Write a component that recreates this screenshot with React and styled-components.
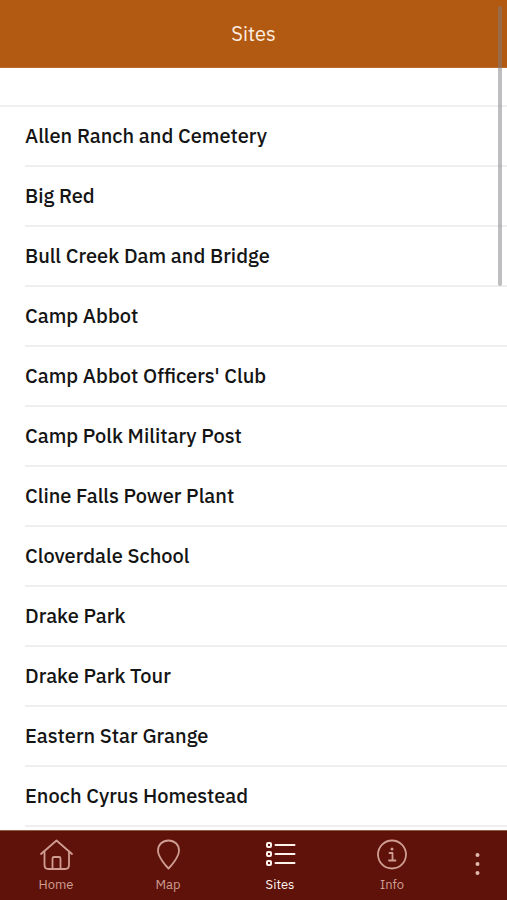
import React from 'react';
import styled, { createGlobalStyle } from 'styled-components';

const GlobalStyle = createGlobalStyle`
    * {
        box-sizing: border-box;
    }

    body {
        margin: 0;
        background: #fff;
        font-family: 'IBM Plex Sans', Roboto, sans-serif;
    }
`;

const Screen = styled.div`
    position: relative;
    display: flex;
    flex-direction: column;
    height: 100vh;
    overflow: hidden;
`;

const Header = styled.header`
    flex: none;
    padding: 20px 16px 19px;
    background: #b35a12;
    border-bottom: 1px solid #b9692c;
    text-align: center;
`;

const Title = styled.h1`
    margin: 0;
    color: #fdeee0;
    font-size: 20px;
    font-weight: 400;
    line-height: 28px;
`;

const ListArea = styled.main`
    flex: 1;
    min-height: 0;
    padding-top: 37px;
    overflow-y: auto;
    scrollbar-width: none;
`;

const SiteList = styled.ul`
    margin: 0;
    padding: 0 0 0 25px;
    border-top: 2px solid #f0f0f0;
    list-style: none;
`;

const SiteItem = styled.li`
    border-bottom: 2px solid #efefef;
`;

const SiteLink = styled.a`
    display: block;
    padding: 15px 16px 15px 0;
    color: #141414;
    font-size: 20px;
    font-weight: 500;
    line-height: 28px;
    text-decoration: none;
`;

const ScrollThumb = styled.div`
    position: absolute;
    top: 6px;
    right: 5px;
    width: 4px;
    height: 280px;
    border-radius: 2px;
    background: rgba(125, 125, 130, 0.5);
    pointer-events: none;
`;

const TabBar = styled.nav`
    flex: none;
    display: flex;
    height: 70px;
    background: #5e120a;
    border-top: 1px solid #8a5f44;
`;

const Tab = styled.a`
    flex: 1;
    display: flex;
    flex-direction: column;
    align-items: center;
    gap: 5px;
    padding-top: 8px;
    color: ${props => props.$active ? '#fff1ec' : '#cf9d92'};
    font-size: 13px;
    line-height: 18px;
    text-decoration: none;
`;

const MoreButton = styled.button`
    flex: none;
    display: flex;
    align-items: center;
    justify-content: center;
    width: 59px;
    padding: 0;
    border: 0;
    background: none;
    color: #dfb9ae;
`;

const Icon = styled.svg`
    display: block;
    width: 34px;
    height: 32px;
    fill: none;
    stroke: currentColor;
    stroke-width: 1.8;
    stroke-linecap: round;
    stroke-linejoin: round;
`;

const HomeIcon = () => (
    <Icon viewBox="0 0 34 32" aria-hidden="true">
        <path d="M2 15 17.500 1.500 33 15" />
        <path d="M5.500 12.500V26Q5.500 30 9.500 30H26Q30 30 30 26V12.500" />
        <path d="M13.500 30V19.500Q13.500 18 15 18H20Q21.500 18 21.500 19.500V30" />
    </Icon>
);

const MapIcon = () => (
    <Icon viewBox="0 0 34 32" aria-hidden="true">
        <path d="M17.500 29.500C15 27 7 18 7 11.500C7 5.500 11.500 1.500 17.500 1.500S28 5.500 28 11.500C28 18 20 27 17.500 29.500Z" />
    </Icon>
);

const SitesIcon = () => (
    <Icon viewBox="0 0 34 32" aria-hidden="true">
        {[6, 15, 24].map(y => (
            <g key={y} strokeWidth="2">
                <rect x="4" y={y - 2} width="4" height="4" rx="1" />
                <path d={`M12.500 ${y}H31.500`} />
            </g>
        ))}
    </Icon>
);

const InfoIcon = () => (
    <Icon viewBox="0 0 34 32" aria-hidden="true">
        <circle cx="17" cy="15.500" r="14" />
        <path d="M14.500 14H17.500V21.500M14 21.500H20.500" />
        <circle cx="17" cy="10" r="1.500" fill="currentColor" stroke="none" />
    </Icon>
);

const MoreIcon = () => (
    <Icon viewBox="0 0 34 32" aria-hidden="true">
        {[5, 14, 23].map(y => (
            <circle key={y} cx="16.500" cy={y} r="2" fill="currentColor" stroke="none" />
        ))}
    </Icon>
);

const sites = [
    'Allen Ranch and Cemetery',
    'Big Red',
    'Bull Creek Dam and Bridge',
    'Camp Abbot',
    "Camp Abbot Officers' Club",
    'Camp Polk Military Post',
    'Cline Falls Power Plant',
    'Cloverdale School',
    'Drake Park',
    'Drake Park Tour',
    'Eastern Star Grange',
    'Enoch Cyrus Homestead'
];

const tabs = [
    { name: 'Home', icon: HomeIcon },
    { name: 'Map', icon: MapIcon },
    { name: 'Sites', icon: SitesIcon },
    { name: 'Info', icon: InfoIcon }
];

class App extends React.Component {
    state = {
        active: 'Sites'
    }

    selectTab = (e, name) => {
        e.preventDefault();
        this.setState({ active: name });
    }

    render(){
        const { active } = this.state;
        return (
            <Screen>
                <GlobalStyle />
                <Header>
                    <Title>Sites</Title>
                </Header>
                <ListArea>
                    <SiteList>
                        {sites.map(site => (
                            <SiteItem key={site}>
                                <SiteLink href="#site">{site}</SiteLink>
                            </SiteItem>
                        ))}
                    </SiteList>
                </ListArea>
                <TabBar>
                    {tabs.map(({ name, icon: TabIcon }) => (
                        <Tab
                            key={name}
                            href={`#${name.toLowerCase()}`}
                            $active={name === active}
                            aria-current={name === active ? 'page' : undefined}
                            onClick={e => this.selectTab(e, name)}
                        >
                            <TabIcon />
                            {name}
                        </Tab>
                    ))}
                    <MoreButton type="button" aria-label="More">
                        <MoreIcon />
                    </MoreButton>
                </TabBar>
                <ScrollThumb />
            </Screen>
        );
    }
}

export default App;
